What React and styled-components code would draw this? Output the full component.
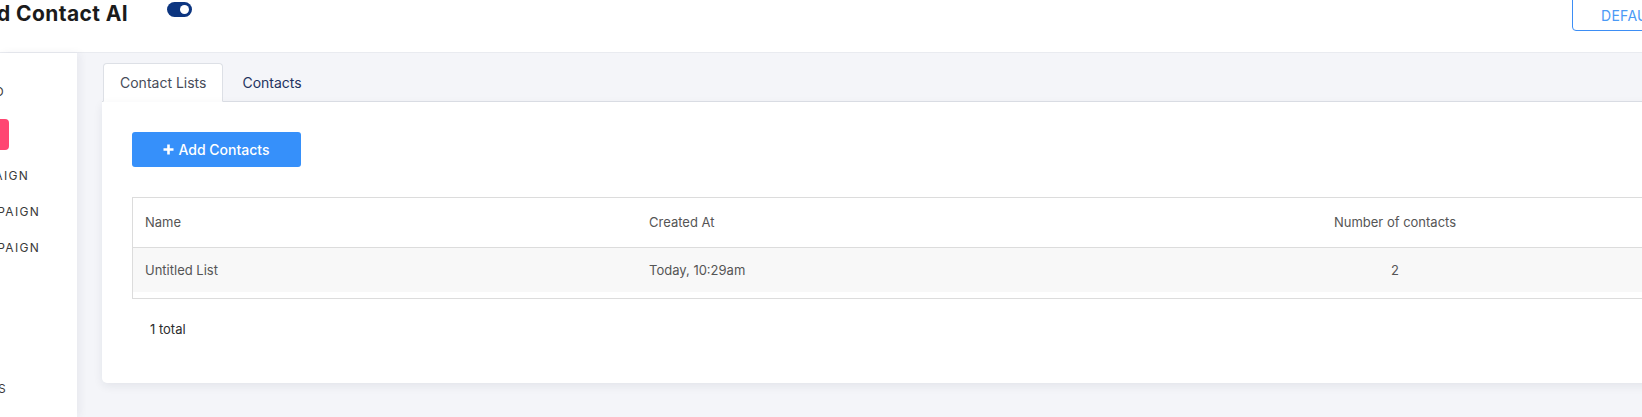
import React, {useState} from "react";
import styled, {createGlobalStyle} from "styled-components";

const GlobalStyle = createGlobalStyle`
    html, body {
        margin: 0;
        padding: 0;
        overflow: hidden;
        background: #f4f5f9;
    }

    body {
        font-family: Inter, "Open Sans", sans-serif;
        color: #333333;
    }

    * {
        box-sizing: border-box;
    }
`;

const Shell = styled.div`
    width: 1680px;
    height: 417px;
    display: flex;
    flex-direction: column;
    background: #f4f5f9;
`;

const Header = styled.header`
    height: 53px;
    flex-shrink: 0;
    display: flex;
    align-items: flex-start;
    background: #ffffff;
    border-bottom: 1px solid #e9ebf0;
    padding-right: 6px;
`;

const Title = styled.h1`
    width: 170px;
    flex-shrink: 0;
    margin: 1px 0 0 -3px;
    font-size: 21px;
    line-height: 26px;
    font-weight: 700;
    letter-spacing: 0.4px;
    color: #1b1b1b;
    white-space: nowrap;
`;

const Toggle = styled.button`
    margin-top: 2px;
    width: 25px;
    height: 15px;
    border: none;
    border-radius: 8px;
    background: #0c3580;
    padding: 0 3px;
    display: flex;
    align-items: center;
    justify-content: ${p => (p.$on ? "flex-end" : "flex-start")};
    cursor: pointer;

    span {
        width: 9px;
        height: 9px;
        border-radius: 50%;
        background: #ffffff;
    }
`;

const WorkspaceButton = styled.button`
    margin: -10px 0 0 auto;
    width: 102px;
    height: 41px;
    border: 1px solid #3d8ef5;
    border-radius: 4px;
    background: #ffffff;
    color: #4b9af6;
    font-family: Inter, sans-serif;
    font-size: 14px;
    text-align: left;
    padding: 10px 0 0 28px;
    letter-spacing: 0.3px;
    white-space: nowrap;
    overflow: hidden;
`;

const Body = styled.div`
    flex: 1;
    display: flex;
    min-height: 0;
`;

const Sidebar = styled.nav`
    width: 77px;
    flex-shrink: 0;
    background: #ffffff;
    box-shadow: 3px 0 8px rgba(30, 40, 70, 0.06);
    display: flex;
    flex-direction: column;
    padding: 20px 0 11px;
    overflow: hidden;
    z-index: 1;
`;

const NavItem = styled.div`
    height: 36px;
    display: flex;
    align-items: center;
    justify-content: flex-end;
    padding-right: ${p => p.$gap}px;
    font-size: 12px;
    letter-spacing: 1.3px;
    text-transform: uppercase;
    color: #3a3a3a;
    white-space: nowrap;
    margin-top: ${p => (p.$bottom ? "auto" : "0")};
`;

const NavCta = styled.div`
    height: 31px;
    margin: 10px 68px 7px 0;
    align-self: flex-end;
    width: 150px;
    border-radius: 4px;
    background: #ff4672;
    flex-shrink: 0;
`;

const Main = styled.main`
    flex: 1;
    padding: 10px 0 0 25px;
    display: flex;
    flex-direction: column;
`;

const Tabs = styled.div`
    display: flex;
    border-bottom: 1px solid #dde0e6;
    padding-left: 1px;
`;

const Tab = styled.button`
    height: 39px;
    margin-bottom: -1px;
    padding: 0 16px;
    border: 1px solid ${p => (p.$active ? "#dde0e6" : "transparent")};
    border-bottom-color: ${p => (p.$active ? "#ffffff" : "transparent")};
    border-radius: 4px 4px 0 0;
    background: ${p => (p.$active ? "#ffffff" : "transparent")};
    color: ${p => (p.$active ? "#474c59" : "#1f3360")};
    font-family: Inter, sans-serif;
    font-size: 14px;
    cursor: pointer;
    margin-right: 2px;
`;

const Card = styled.section`
    height: 281px;
    background: #ffffff;
    border-radius: 0 0 5px 5px;
    box-shadow: 0 3px 10px rgba(30, 40, 70, 0.08);
    padding: 30px 30px 0;
`;

const PrimaryButton = styled.button`
    width: 169px;
    height: 35px;
    border: none;
    border-radius: 3px;
    background: #3690fa;
    color: #ffffff;
    font-family: Inter, sans-serif;
    font-size: 14px;
    font-weight: 500;
    display: flex;
    align-items: center;
    justify-content: center;
    gap: 4px;
    cursor: pointer;
`;

const TableBox = styled.div`
    margin-top: 30px;
    border: 1px solid #dcdcdc;
    padding-bottom: 6px;
`;

const Table = styled.table`
    width: 100%;
    border-collapse: collapse;
    table-layout: fixed;
    font-size: 13px;
    color: #555555;

    th {
        font-weight: 400;
        height: 49px;
        border-bottom: 1px solid #dcdcdc;
    }

    td {
        height: 45px;
        background: #f8f8f8;
    }

    th, td {
        padding: 0 12px;
        text-align: left;
    }

    th:last-child, td:last-child {
        text-align: center;
    }
`;

const Total = styled.div`
    padding: 22px 0 0 18px;
    font-size: 13px;
    color: #2d2d2d;
`;

const PlusIcon = () => (
    <svg width="11" height="11" viewBox="0 0 11 11">
        <path d="M5.5 0.5v10M0.5 5.5h10" stroke="#ffffff" strokeWidth="2.6"/>
    </svg>
);

const navItems = [
    {label: "Dashboard", gap: 72},
    {cta: true},
    {label: "Campaign", gap: 48},
    {label: "SMS Campaign", gap: 37},
    {label: "SMS Campaign", gap: 37},
    {label: "Contacts", gap: 70, bottom: true},
];

const lists = [
    {name: "Untitled List", created: "Today, 10:29am", count: 2},
];

export default function App() {
    const [tab, setTab] = useState("lists");
    const [enabled, setEnabled] = useState(true);

    return (
        <React.Fragment>
            <GlobalStyle/>
            <Shell>
                <Header>
                    <Title>d Contact AI</Title>
                    <Toggle $on={enabled} onClick={() => setEnabled(!enabled)}><span/></Toggle>
                    <WorkspaceButton>DEFAULT</WorkspaceButton>
                </Header>
                <Body>
                    <Sidebar>
                        {navItems.map((item, i) =>
                            item.cta
                                ? <NavCta key={i}/>
                                : <NavItem key={i} $gap={item.gap} $bottom={item.bottom}>{item.label}</NavItem>
                        )}
                    </Sidebar>
                    <Main>
                        <Tabs>
                            <Tab $active={tab === "lists"} onClick={() => setTab("lists")}>Contact Lists</Tab>
                            <Tab $active={tab === "contacts"} onClick={() => setTab("contacts")}>Contacts</Tab>
                        </Tabs>
                        <Card>
                            <PrimaryButton><PlusIcon/>Add Contacts</PrimaryButton>
                            <TableBox>
                                <Table>
                                    <colgroup>
                                        <col style={{width: "504px"}}/>
                                        <col style={{width: "504px"}}/>
                                        <col/>
                                    </colgroup>
                                    <thead>
                                    <tr>
                                        <th>Name</th>
                                        <th>Created At</th>
                                        <th>Number of contacts</th>
                                    </tr>
                                    </thead>
                                    <tbody>
                                    {lists.map(list => (
                                        <tr key={list.name}>
                                            <td>{list.name}</td>
                                            <td>{list.created}</td>
                                            <td>{list.count}</td>
                                        </tr>
                                    ))}
                                    </tbody>
                                </Table>
                            </TableBox>
                            <Total>{lists.length} total</Total>
                        </Card>
                    </Main>
                </Body>
            </Shell>
        </React.Fragment>
    )
}
